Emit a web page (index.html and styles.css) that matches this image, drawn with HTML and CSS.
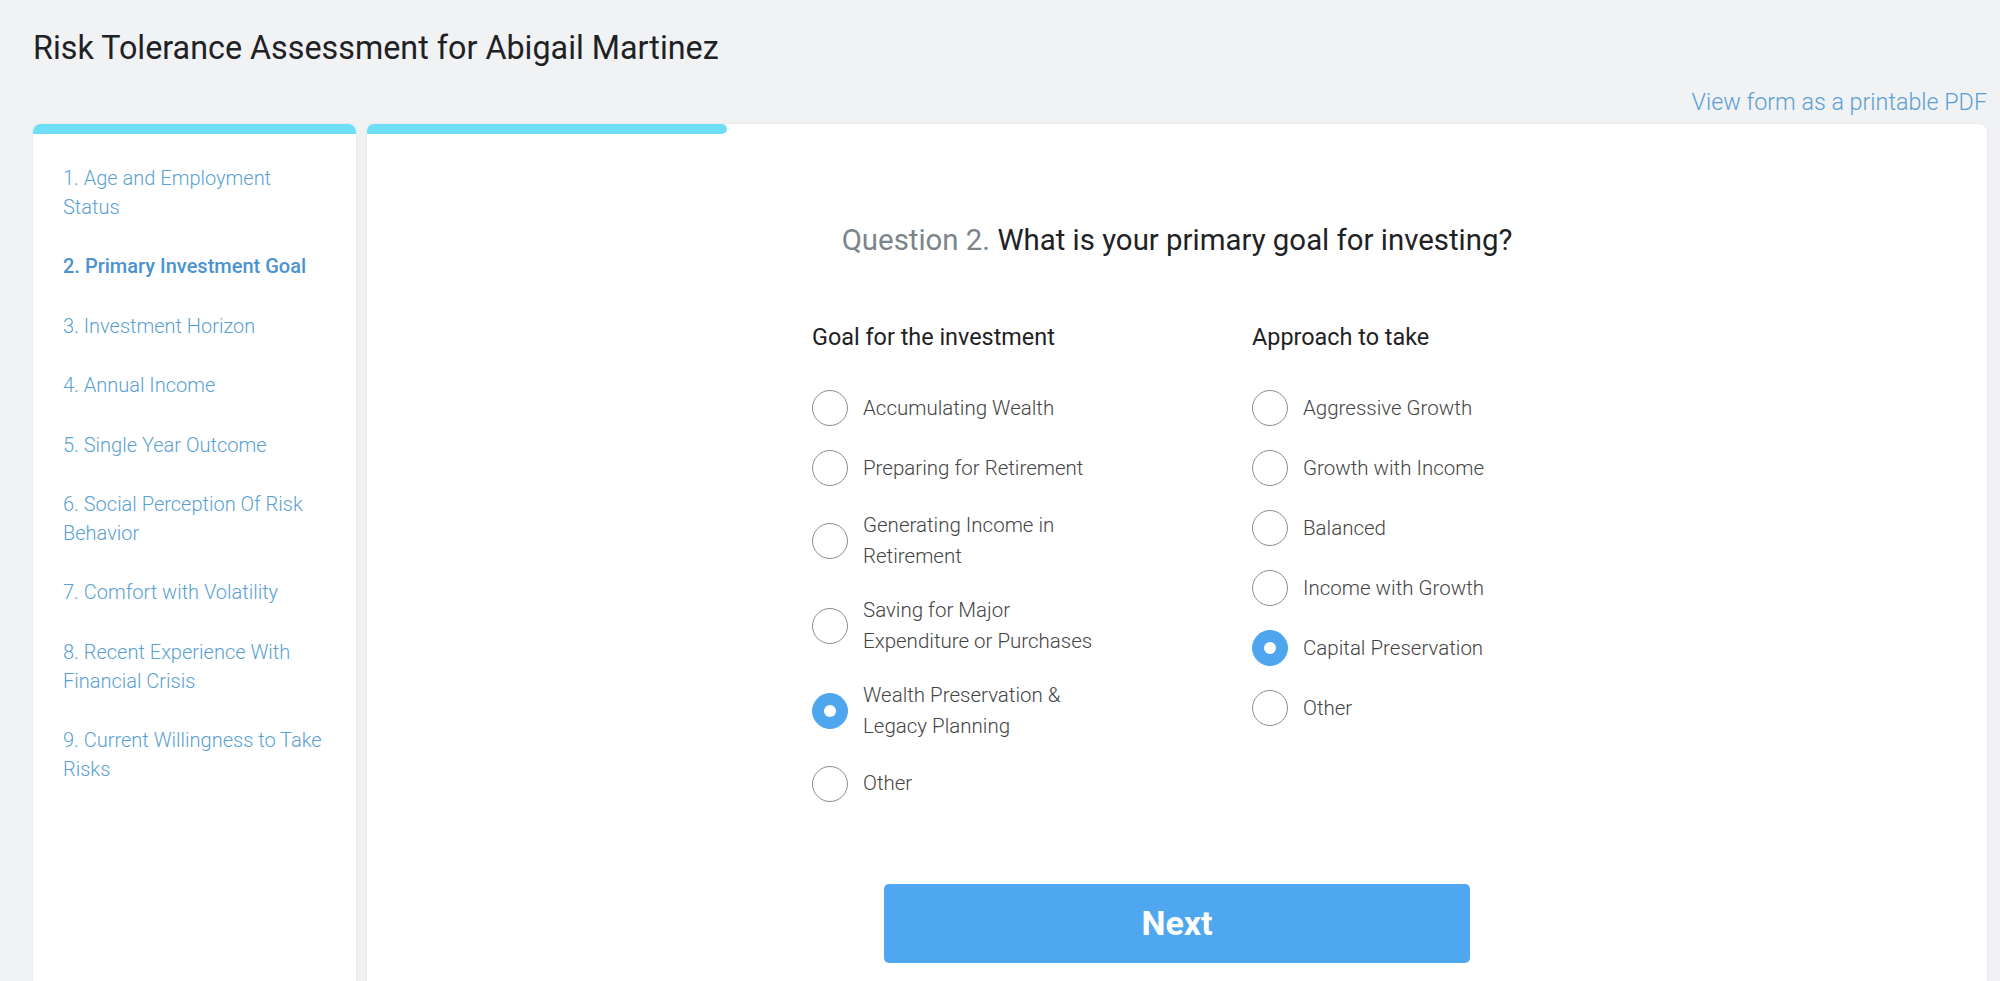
FILE: index.html
```html
<!DOCTYPE html>
<html lang="en">
<head>
<meta charset="utf-8">
<title>Risk Tolerance Assessment</title>
<link rel="stylesheet" href="styles.css">
</head>
<body>
<div class="page">
  <header class="page-header">
    <h1 class="page-title">Risk Tolerance Assessment for Abigail Martinez</h1>
    <div class="pdf-row"><a class="pdf-link" href="#">View form as a printable PDF</a></div>
  </header>
  <div class="layout">
    <aside class="card sidebar">
      <div class="card-bar"></div>
      <ol class="steps">
        <li class="step">1. Age and Employment Status</li>
        <li class="step step-active">2. Primary Investment Goal</li>
        <li class="step">3. Investment Horizon</li>
        <li class="step">4. Annual Income</li>
        <li class="step">5. Single Year Outcome</li>
        <li class="step">6. Social Perception Of Risk Behavior</li>
        <li class="step">7. Comfort with Volatility</li>
        <li class="step">8. Recent Experience With Financial Crisis</li>
        <li class="step">9. Current Willingness to Take Risks</li>
      </ol>
    </aside>
    <main class="card main">
      <div class="progress"><div class="progress-fill" style="width:22.22%"></div></div>
      <section class="question-area">
        <h2 class="question"><span class="question-num">Question 2.</span> What is your primary goal for investing?</h2>
        <div class="columns">
          <div class="col col-goal">
            <h3 class="col-title">Goal for the investment</h3>
            <div class="options">
              <div class="option"><span class="radio"></span><span class="option-label">Accumulating Wealth</span></div>
              <div class="option"><span class="radio"></span><span class="option-label">Preparing for Retirement</span></div>
              <div class="option"><span class="radio"></span><span class="option-label">Generating Income in Retirement</span></div>
              <div class="option"><span class="radio"></span><span class="option-label">Saving for Major Expenditure or Purchases</span></div>
              <div class="option"><span class="radio radio-on"></span><span class="option-label">Wealth Preservation &amp; Legacy Planning</span></div>
              <div class="option"><span class="radio"></span><span class="option-label">Other</span></div>
            </div>
          </div>
          <div class="col col-approach">
            <h3 class="col-title">Approach to take</h3>
            <div class="options">
              <div class="option"><span class="radio"></span><span class="option-label">Aggressive Growth</span></div>
              <div class="option"><span class="radio"></span><span class="option-label">Growth with Income</span></div>
              <div class="option"><span class="radio"></span><span class="option-label">Balanced</span></div>
              <div class="option"><span class="radio"></span><span class="option-label">Income with Growth</span></div>
              <div class="option"><span class="radio radio-on"></span><span class="option-label">Capital Preservation</span></div>
              <div class="option"><span class="radio"></span><span class="option-label">Other</span></div>
            </div>
          </div>
        </div>
        <div class="actions"><button class="next-btn" type="button">Next</button></div>
      </section>
    </main>
  </div>
</div>
</body>
</html>
```
FILE: styles.css
```css
html, body {
  margin: 0;
  padding: 0;
}
body {
  background: #f1f2f4;
  font-family: Roboto, "Noto Sans", "Liberation Sans", sans-serif;
  color: #222;
  overflow: hidden;
}
.page {
  padding: 28px 13px 0 33px;
}
.page-title {
  margin: 0;
  font-size: 32.3px;
  line-height: 40px;
  font-weight: 400;
  color: #1f2224;
}
.pdf-row {
  margin-top: 19px;
  display: flex;
  justify-content: flex-end;
}
.pdf-link {
  font-size: 23.3px;
  line-height: 30px;
  font-weight: 300;
  color: #5a9fd3;
  text-decoration: none;
}
.layout {
  margin-top: 7px;
  display: flex;
  gap: 11px;
  align-items: stretch;
}
.card {
  background: #fff;
  border-radius: 8px 8px 0 0;
  box-shadow: 0 0 3px rgba(0, 0, 0, 0.08);
  min-height: 900px;
}
.sidebar {
  width: 323px;
  flex: none;
}
.card-bar {
  height: 10px;
  background: #6fdff6;
  border-radius: 8px 8px 0 0;
}
.steps {
  list-style: none;
  margin: 0;
  padding: 30px 30px 0 30px;
  display: flex;
  flex-direction: column;
  gap: 30.4px;
}
.step {
  font-size: 20px;
  line-height: 29px;
  font-weight: 300;
  color: #5a9fd3;
}
.step-active {
  font-weight: 500;
  color: #4a93d0;
}
.main {
  flex: 1;
  min-width: 0;
}
.progress {
  height: 10px;
}
.progress-fill {
  height: 10px;
  background: #6fdff6;
  border-radius: 8px 6px 6px 0;
}
.question-area {
  padding-top: 86px;
  display: flex;
  flex-direction: column;
  align-items: center;
}
.question {
  margin: 0;
  font-size: 29.4px;
  line-height: 40px;
  font-weight: 400;
  color: #1f2224;
  text-align: center;
}
.question-num {
  color: #7c858c;
}
.columns {
  margin-top: 62px;
  display: flex;
  gap: 140px;
}
.col-goal {
  width: 300px;
}
.col-approach {
  width: 290px;
}
.col-title {
  margin: 0 0 38px 0;
  font-size: 23.4px;
  line-height: 30px;
  font-weight: 400;
  color: #1f2224;
}
.options {
  display: flex;
  flex-direction: column;
  gap: 24px;
}
.option {
  display: flex;
  align-items: center;
  gap: 15px;
}
.radio {
  flex: none;
  width: 36px;
  height: 36px;
  box-sizing: border-box;
  border: 1.5px solid #8c8c8c;
  border-radius: 50%;
  display: flex;
  align-items: center;
  justify-content: center;
}
.radio-on {
  background: #4ea7ee;
  border-color: #4ea7ee;
}
.radio-on::after {
  content: "";
  width: 12px;
  height: 12px;
  border-radius: 50%;
  background: #fff;
}
.option-label {
  font-size: 20.5px;
  line-height: 30.6px;
  font-weight: 300;
  color: #444;
}
.actions {
  margin-top: 82px;
}
.next-btn {
  width: 586px;
  height: 79px;
  border: none;
  border-radius: 5px;
  background: #4fa8ef;
  color: #fff;
  font-family: Roboto, "Noto Sans", "Liberation Sans", sans-serif;
  font-size: 34px;
  font-weight: 700;
  cursor: pointer;
}
```
